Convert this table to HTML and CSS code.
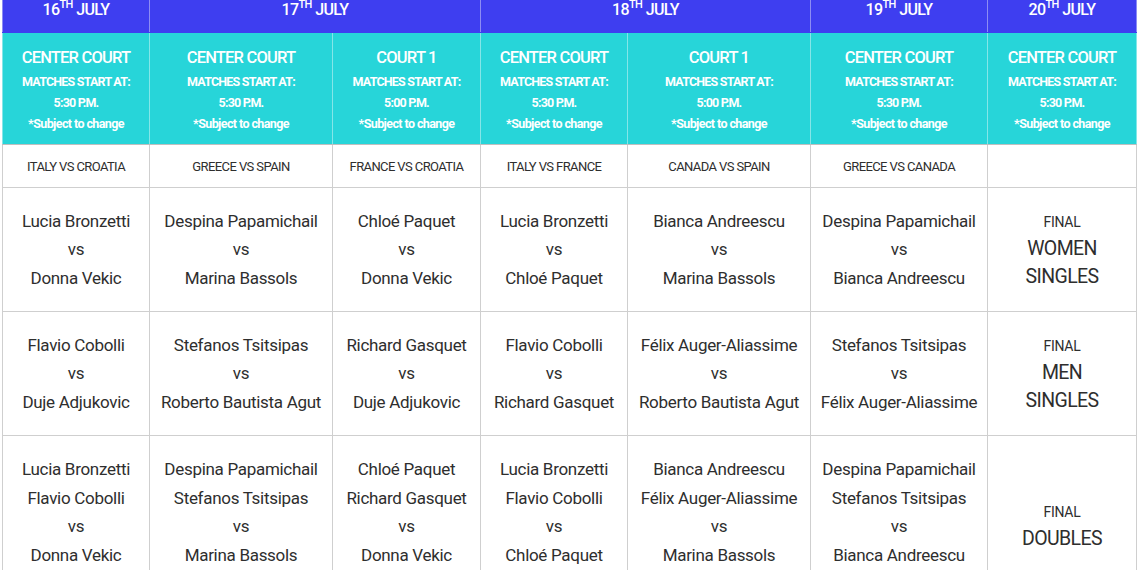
FILE: index.html
```html
<!DOCTYPE html>
<html lang="en">
<head>
<meta charset="utf-8">
<title>Schedule</title>
<link rel="stylesheet" href="styles.css">
</head>
<body>
<table class="schedule">
  <colgroup>
    <col class="c1"><col class="c2"><col class="c3"><col class="c4"><col class="c5"><col class="c6"><col class="c7">
  </colgroup>
  <thead>
    <tr class="days">
      <th>16<sup>TH</sup> JULY</th>
      <th colspan="2">17<sup>TH</sup> JULY</th>
      <th colspan="2">18<sup>TH</sup> JULY</th>
      <th>19<sup>TH</sup> JULY</th>
      <th>20<sup>TH</sup> JULY</th>
    </tr>
    <tr class="courts">
      <th><span class="court">CENTER COURT</span><span class="info">MATCHES START AT:</span><span class="info">5:30 P.M.</span><span class="note">*Subject to change</span></th>
      <th><span class="court">CENTER COURT</span><span class="info">MATCHES START AT:</span><span class="info">5:30 P.M.</span><span class="note">*Subject to change</span></th>
      <th><span class="court">COURT 1</span><span class="info">MATCHES START AT:</span><span class="info">5:00 P.M.</span><span class="note">*Subject to change</span></th>
      <th><span class="court">CENTER COURT</span><span class="info">MATCHES START AT:</span><span class="info">5:30 P.M.</span><span class="note">*Subject to change</span></th>
      <th><span class="court">COURT 1</span><span class="info">MATCHES START AT:</span><span class="info">5:00 P.M.</span><span class="note">*Subject to change</span></th>
      <th><span class="court">CENTER COURT</span><span class="info">MATCHES START AT:</span><span class="info">5:30 P.M.</span><span class="note">*Subject to change</span></th>
      <th><span class="court">CENTER COURT</span><span class="info">MATCHES START AT:</span><span class="info">5:30 P.M.</span><span class="note">*Subject to change</span></th>
    </tr>
  </thead>
  <tbody>
    <tr class="ties">
      <td>ITALY VS CROATIA</td>
      <td>GREECE VS SPAIN</td>
      <td>FRANCE VS CROATIA</td>
      <td>ITALY VS FRANCE</td>
      <td>CANADA VS SPAIN</td>
      <td>GREECE VS CANADA</td>
      <td></td>
    </tr>
    <tr class="match">
      <td>Lucia Bronzetti<br>vs<br>Donna Vekic</td>
      <td>Despina Papamichail<br>vs<br>Marina Bassols</td>
      <td>Chloé Paquet<br>vs<br>Donna Vekic</td>
      <td>Lucia Bronzetti<br>vs<br>Chloé Paquet</td>
      <td>Bianca Andreescu<br>vs<br>Marina Bassols</td>
      <td>Despina Papamichail<br>vs<br>Bianca Andreescu</td>
      <td class="final"><span class="final-label">FINAL</span><span class="final-title">WOMEN<br>SINGLES</span></td>
    </tr>
    <tr class="match">
      <td>Flavio Cobolli<br>vs<br>Duje Adjukovic</td>
      <td>Stefanos Tsitsipas<br>vs<br>Roberto Bautista Agut</td>
      <td>Richard Gasquet<br>vs<br>Duje Adjukovic</td>
      <td>Flavio Cobolli<br>vs<br>Richard Gasquet</td>
      <td>Félix Auger-Aliassime<br>vs<br>Roberto Bautista Agut</td>
      <td>Stefanos Tsitsipas<br>vs<br>Félix Auger-Aliassime</td>
      <td class="final"><span class="final-label">FINAL</span><span class="final-title">MEN<br>SINGLES</span></td>
    </tr>
    <tr class="match doubles">
      <td>Lucia Bronzetti<br>Flavio Cobolli<br>vs<br>Donna Vekic<br>Duje Adjukovic</td>
      <td>Despina Papamichail<br>Stefanos Tsitsipas<br>vs<br>Marina Bassols<br>Roberto Bautista Agut</td>
      <td>Chloé Paquet<br>Richard Gasquet<br>vs<br>Donna Vekic<br>Duje Adjukovic</td>
      <td>Lucia Bronzetti<br>Flavio Cobolli<br>vs<br>Chloé Paquet<br>Richard Gasquet</td>
      <td>Bianca Andreescu<br>Félix Auger-Aliassime<br>vs<br>Marina Bassols<br>Roberto Bautista Agut</td>
      <td>Despina Papamichail<br>Stefanos Tsitsipas<br>vs<br>Bianca Andreescu<br>Félix Auger-Aliassime</td>
      <td class="final"><span class="final-label">FINAL</span><span class="final-title">DOUBLES</span></td>
    </tr>
  </tbody>
</table>
</body>
</html>
```
FILE: styles.css
```css
html, body {
  margin: 0;
  padding: 0;
  background: #ffffff;
  overflow: hidden;
}

body {
  padding-left: 2px;
  font-family: Roboto, "Liberation Sans", sans-serif;
  color: #2e2e2e;
}

.schedule {
  border-collapse: collapse;
  table-layout: fixed;
  width: 1134px;
}

.c1 { width: 147px; }
.c2 { width: 183px; }
.c3 { width: 148px; }
.c4 { width: 147px; }
.c5 { width: 183px; }
.c6 { width: 177px; }
.c7 { width: 149px; }

.schedule th,
.schedule td {
  text-align: center;
  padding: 0;
  border: 1px solid #cfcfcf;
}

.days th {
  background: #3e3ef0;
  color: #ffffff;
  font-size: 16px;
  font-weight: 500;
  height: 32px;
  line-height: 19px;
  vertical-align: top;
  border-top: none;
  border-color: #8c8cf4;
  border-bottom-color: #3e3ef0;
  letter-spacing: -0.6px;
}

.days sup {
  font-size: 11px;
  vertical-align: top;
  line-height: 10px;
}

.courts th {
  background: #27d5d9;
  color: #ffffff;
  height: 111px;
  vertical-align: middle;
  border-color: #84e6e8;
  border-top-color: #27d5d9;
  border-bottom-color: #bfbfbf;
}

.courts span {
  display: block;
}

.court {
  font-size: 16.5px;
  font-weight: 500;
  line-height: 27px;
  letter-spacing: -0.8px;
}

.info {
  font-size: 12.5px;
  font-weight: 700;
  line-height: 21px;
  letter-spacing: -0.8px;
}

.note {
  font-size: 12.5px;
  font-weight: 700;
  line-height: 21px;
  letter-spacing: -0.6px;
}

.ties td {
  height: 42px;
  font-size: 13px;
  font-weight: 400;
  vertical-align: middle;
  letter-spacing: -0.6px;
}

.match td {
  height: 123px;
  font-size: 17px;
  line-height: 28.5px;
  vertical-align: middle;
  letter-spacing: -0.3px;
}

.doubles td {
  height: 150px;
  vertical-align: top;
  padding-top: 19px;
}

.doubles td.final {
  vertical-align: top;
  padding-top: 63px;
}

.final span {
  display: block;
}

.final-label {
  font-size: 14px;
  line-height: 26px;
  letter-spacing: -0.3px;
}

.final-title {
  font-size: 19.5px;
  line-height: 28px;
  letter-spacing: -0.6px;
}
```
